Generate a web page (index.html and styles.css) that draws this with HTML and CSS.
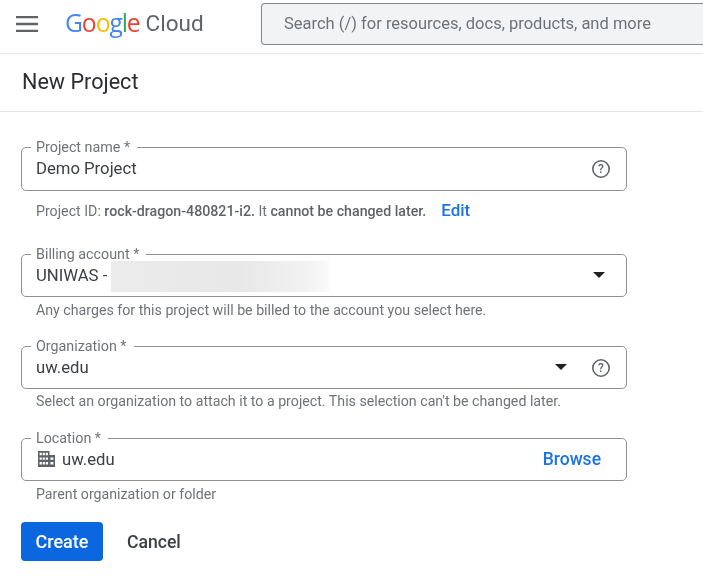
FILE: index.html
```html
<!DOCTYPE html>
<html lang="en">
<head>
<meta charset="utf-8">
<title>New Project</title>
<link rel="stylesheet" href="styles.css">
</head>
<body>
<header class="topbar">
  <svg class="menu" width="22" height="16" viewBox="0 0 22 16"><path d="M0 1h22M0 8h22M0 15h22" stroke="#5f6368" stroke-width="2.4"/></svg>
  <div class="logo"><span class="g-blue">G</span><span class="g-red">o</span><span class="g-yellow">o</span><span class="g-blue">g</span><span class="g-green">l</span><span class="g-red">e</span><span class="cloud">Cloud</span></div>
  <div class="search">Search (/) for resources, docs, products, and more</div>
</header>
<div class="titlebar"><h1>New Project</h1></div>
<main class="form">
  <fieldset class="field">
    <legend>Project name *</legend>
    <div class="row"><span class="value">Demo Project</span>
      <svg class="help help-end" width="20" height="20" viewBox="0 0 20 20"><circle cx="10" cy="10" r="8.2" fill="none" stroke="#5f6368" stroke-width="1.6"/><text x="10" y="14.4" text-anchor="middle" class="q">?</text></svg>
    </div>
  </fieldset>
  <p class="hint hint-id">Project ID: <b>rock-dragon-480821-i2.</b> It <b>cannot be changed later.</b><a class="edit">Edit</a></p>
  <fieldset class="field">
    <legend>Billing account *</legend>
    <div class="row row-short"><span class="value">UNIWAS -</span><span class="redacted"></span><span class="arrow"></span></div>
  </fieldset>
  <p class="hint hint-billing">Any charges for this project will be billed to the account you select here.</p>
  <fieldset class="field">
    <legend>Organization *</legend>
    <div class="row row-short"><span class="value">uw.edu</span><span class="arrow arrow-org"></span>
      <svg class="help" width="20" height="20" viewBox="0 0 20 20"><circle cx="10" cy="10" r="8.2" fill="none" stroke="#5f6368" stroke-width="1.6"/><text x="10" y="14.4" text-anchor="middle" class="q">?</text></svg>
    </div>
  </fieldset>
  <p class="hint hint-org">Select an organization to attach it to a project. This selection can't be changed later.</p>
  <fieldset class="field">
    <legend>Location *</legend>
    <div class="row row-short">
      <svg class="bldg" width="17" height="16" viewBox="0 0 17 16"><path fill="#5f6368" fill-rule="evenodd" d="M0 0h11.5v4H17v12H0zM1.6 1.8v2.4h2.2V1.8zM4.7 1.8v2.4h2.2V1.8zM7.8 1.8v2.4H10V1.8zM1.6 6.4v2.4h2.2V6.4zM4.7 6.4v2.4h2.2V6.4zM7.8 6.4v2.4H10V6.4zM1.6 11v2.4h2.2V11zM4.7 11v2.4h2.2V11zM7.8 11v2.4H10V11zM12.4 6.4v2.4h3V6.4zM12.4 11v2.4h3V11z"/></svg>
      <span class="value">uw.edu</span><a class="browse">Browse</a>
    </div>
  </fieldset>
  <p class="hint hint-loc">Parent organization or folder</p>
  <div class="actions"><button class="create">Create</button><button class="cancel">Cancel</button></div>
</main>
</body>
</html>
```
FILE: styles.css
```css
* { box-sizing: border-box; }
html, body { margin: 0; padding: 0; }
body { width: 703px; height: 585px; overflow: hidden; background: #fff; font-family: Roboto, "Liberation Sans", sans-serif; color: #3c4043; filter: blur(0.35px); }
.topbar { height: 54px; border-bottom: 1px solid #e3e4e6; display: flex; align-items: flex-start; }
.menu { margin: 16px 0 0 16px; flex: none; }
.logo { margin: 7px 0 0 27px; width: 196px; flex: none; font-family: "Open Sans", Roboto, sans-serif; font-size: 24.7px; line-height: 32px; letter-spacing: -1.1px; white-space: nowrap; }
.g-blue { color: #4285f4; }
.g-red { color: #ea4335; }
.g-yellow { color: #fbbc05; }
.g-green { color: #34a853; }
.cloud { color: #5f6368; font-family: Roboto, sans-serif; font-size: 22.5px; margin-left: 6px; letter-spacing: 0; position: relative; top: -1px; }
.search { margin-top: 3px; flex: 1; height: 42px; background: #f1f3f4; border: 1px solid #80868b; border-right: 0; border-radius: 4px 0 0 4px; padding-left: 22px; line-height: 40px; font-size: 16.5px; color: #6f7377; white-space: nowrap; }
.titlebar { height: 58px; border-bottom: 1px solid #e3e4e6; padding-left: 22px; }
h1 { margin: 0; font-weight: 400; font-size: 21.6px; line-height: 55px; color: #2b2d31; }
.form { width: 606px; margin-left: 21px; padding-top: 27px; }
.field { margin: 0; padding: 0 14px; border: 1px solid #8d9196; border-radius: 5px; }
legend { padding: 0 7px 0 5px; margin-left: -5px; font-size: 14.3px; line-height: 16px; color: #6f7377; height: 16px; white-space: nowrap; }
.row { height: 35px; display: flex; align-items: flex-start; position: relative; }
.row-short { height: 34px; }
.value { font-size: 16.7px; line-height: 20px; color: #3c4043; margin-top: 4px; white-space: nowrap; }
.help { flex: none; margin: 4px 1px 0 0; }
.help-end { margin-left: auto; }
.q { font: 500 12px Roboto, sans-serif; fill: #5f6368; }
.hint { margin: 0; font-size: 14.2px; line-height: 16px; color: #6f7377; padding-left: 15px; white-space: nowrap; }
.hint b { font-weight: 500; color: #5f6368; }
.hint-id { height: 55px; padding-top: 11px; }
.hint-billing { height: 41px; padding-top: 5px; }
.hint-org { height: 41px; padding-top: 4px; }
.hint-loc { height: 41px; padding-top: 5px; }
.edit { color: #1a73e8; font-size: 17px; font-weight: 500; margin-left: 15px; }
.redacted { position: absolute; left: 75px; top: -1px; width: 218px; height: 31px; background: linear-gradient(90deg, #ebebeb, #e8e8e8 60%, #f2f2f2 90%, #fafafa); }
.arrow { margin: 10px 7px 0 auto; width: 0; height: 0; border: 6px solid transparent; border-top: 6px solid #202124; border-bottom: 0; }
.arrow-org { margin-right: 24px; }
.bldg { margin: 5px 7px 0 2px; flex: none; }
.browse { margin: 3px 11px 0 auto; color: #1a73e8; font-size: 17.5px; font-weight: 500; line-height: 20px; }
.actions { display: flex; align-items: center; }
button { font-family: inherit; font-size: 17.6px; font-weight: 500; border: 0; background: none; padding: 0; }
.create { width: 82px; height: 39px; background: #0b67e0; color: #fff; border-radius: 4px; font-size: 18px; }
.cancel { margin-left: 24px; color: #3c4043; }
```
